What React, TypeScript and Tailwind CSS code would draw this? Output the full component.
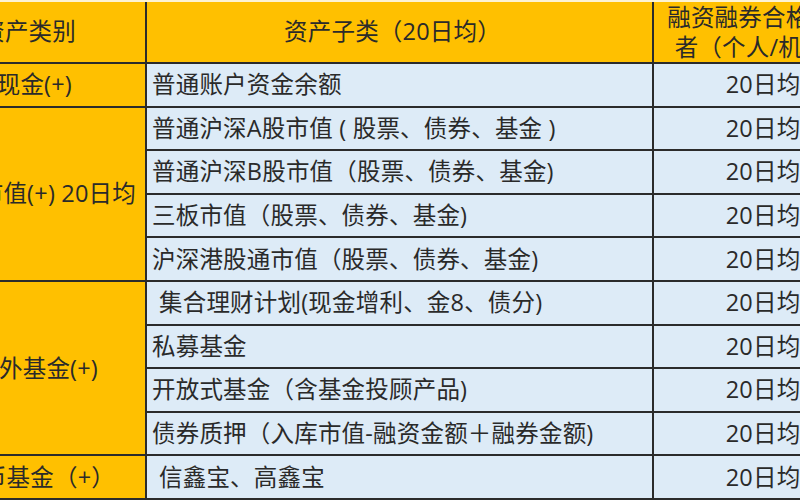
import * as React from "react";

const rows: { text: string; indent?: boolean }[] = [
  { text: "普通账户资金余额" },
  { text: "普通沪深A股市值 ( 股票、债券、基金 )" },
  { text: "普通沪深B股市值（股票、债券、基金)" },
  { text: "三板市值（股票、债券、基金)" },
  { text: "沪深港股通市值（股票、债券、基金)" },
  { text: "集合理财计划(现金增利、金8、债分)", indent: true },
  { text: "私募基金" },
  { text: "开放式基金（含基金投顾产品)" },
  { text: "债券质押（入库市值-融资金额＋融券金额)" },
  { text: "信鑫宝、高鑫宝", indent: true },
];

export default function App() {
  return (
    <div className="w-[800px] h-[500px] overflow-hidden bg-[#fdf3d2] font-['Open_Sans','Noto_Sans_CJK_SC',sans-serif] text-[23.5px] tracking-[0.2px] text-[#2a2a2a]">
      <div className="h-[2px]" />
      <div className="w-[868px] grid grid-cols-[145px_505px_216px] grid-rows-[60px_repeat(10,41.6px)] gap-[2px] bg-[#2b2b2b] pb-[2px]">
        {/* header */}
        <div className="bg-[#ffc000] flex items-center justify-end pr-[69px] overflow-hidden whitespace-nowrap">资产类别</div>
        <div className="bg-[#ffc000] flex items-center justify-center pr-[14px] whitespace-nowrap">资产子类（20日均）</div>
        <div className="bg-[#ffc000] flex items-center justify-center text-center px-[8px] leading-[30px]">
          融资融券合格投资者（个人/机构）
        </div>

        {/* left category column */}
        <div className="bg-[#ffc000] col-start-1 row-start-2 flex items-center justify-end pr-[73px] overflow-hidden whitespace-nowrap">现金(+)</div>
        <div className="bg-[#ffc000] col-start-1 row-start-3 row-span-4 flex items-center justify-end pr-[9px] overflow-hidden whitespace-nowrap">证券市值(+) 20日均</div>
        <div className="bg-[#ffc000] col-start-1 row-start-7 row-span-4 flex items-center justify-end pr-[47px] overflow-hidden whitespace-nowrap">场外基金(+)</div>
        <div className="bg-[#ffc000] col-start-1 row-start-11 flex items-center justify-end pr-[30px] overflow-hidden whitespace-nowrap">货币基金（+）</div>

        {rows.map((r, i) => (
          <React.Fragment key={i}>
            <div
              className={
                "bg-[#ddebf7] col-start-2 flex items-center whitespace-nowrap " +
                (r.indent ? "pl-[12px]" : "pl-[5px]")
              }
            >
              {r.text}
            </div>
            <div className="bg-[#ddebf7] col-start-3 flex items-center justify-center whitespace-nowrap pl-[2px]">20日均</div>
          </React.Fragment>
        ))}
      </div>
    </div>
  );
}
